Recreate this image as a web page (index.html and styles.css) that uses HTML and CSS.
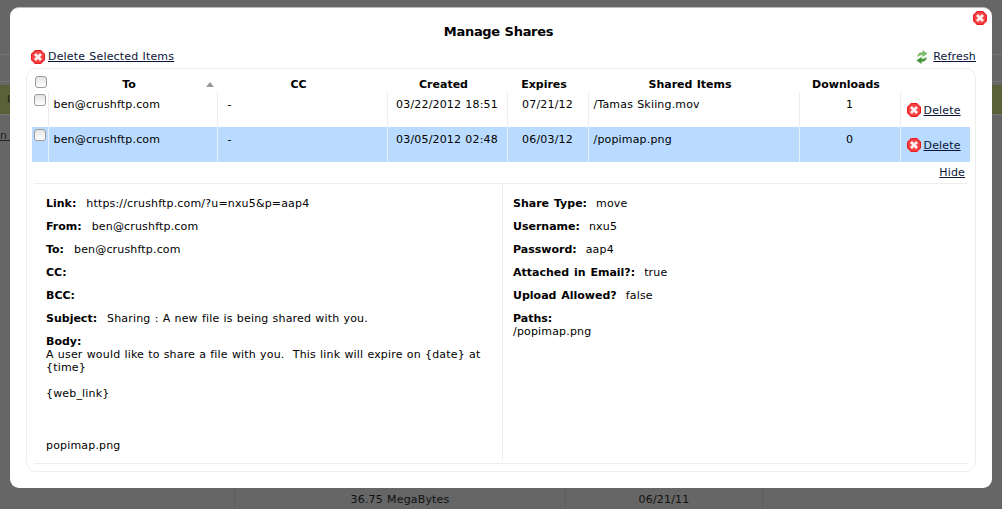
FILE: index.html
```html
<!DOCTYPE html>
<html lang="en">
<head>
<meta charset="utf-8">
<title>Manage Shares</title>
<link rel="stylesheet" href="styles.css">
</head>
<body>
<svg class="defs" width="0" height="0" aria-hidden="true">
  <symbol id="x-icon" viewBox="0 0 14 14">
    <path d="M4 0H10L14 4V10L10 14H4L0 10V4Z" fill="#ee1c22"/>
    <path d="M4.3 1.2H9.7L12.8 4.3V9.7L9.7 12.8H4.3L1.2 9.7V4.3Z" fill="#f4474a"/>
    <path d="M4 4L10 10M10 4L4 10" stroke="#fdf0f0" stroke-width="2.8" fill="none"/>
  </symbol>
</svg>
<div class="backdrop">
  <div class="bg-top"></div>
  <div class="bg-line"></div>
  <div class="bg-bar">U</div>
  <div class="bg-link"><span>n p</span></div>
  <div class="bg-bottom">
    <div class="bg-cell bg-c1"></div>
    <div class="bg-cell bg-c2">36.75 MegaBytes</div>
    <div class="bg-cell bg-c3">06/21/11</div>
    <div class="bg-cell bg-c4"></div>
  </div>
</div>
<main class="modal">
  <svg class="close"><use href="#x-icon"/></svg>
  <h1 class="title">Manage Shares</h1>
  <div class="toolbar">
    <a class="tool" href="#"><svg class="ico"><use href="#x-icon"/></svg><span class="lnk">Delete Selected Items</span></a>
    <a class="tool refresh" href="#">
      <svg class="ico" viewBox="0 0 14 14">
        <path d="M7.5 0L12.5 3.6L7.5 7.2V5.2C5.6 5.2 4 5.6 2.4 7C2 4 4.4 2.2 7.5 2.2Z" fill="#7dbb6c"/>
        <path d="M6.5 14L1.5 10.4L6.5 6.8V8.8C8.4 8.8 10 8.4 11.6 7C12 10 9.6 11.8 6.5 11.8Z" fill="#45963a"/>
      </svg>
      <span class="lnk">Refresh</span></a>
  </div>
  <section class="panel">
    <table class="shares">
      <colgroup>
        <col class="c-check"><col class="c-to"><col class="c-cc"><col class="c-created"><col class="c-expires"><col class="c-items"><col class="c-down"><col class="c-del">
      </colgroup>
      <thead>
        <tr>
          <th><span class="cb cb-head"></span></th>
          <th class="sorted">To<span class="sort"></span></th>
          <th>CC</th>
          <th>Created</th>
          <th>Expires</th>
          <th>Shared Items</th>
          <th>Downloads</th>
          <th></th>
        </tr>
      </thead>
      <tbody>
        <tr>
          <td class="chk"><span class="cb"></span></td>
          <td>ben@crushftp.com</td>
          <td class="pad">-</td>
          <td class="mid">03/22/2012 18:51</td>
          <td class="mid">07/21/12</td>
          <td>/Tamas Skiing.mov</td>
          <td class="mid">1</td>
          <td class="del"><a class="tool" href="#"><svg class="ico"><use href="#x-icon"/></svg><span class="lnk">Delete</span></a></td>
        </tr>
        <tr class="sel">
          <td class="chk"><span class="cb"></span></td>
          <td>ben@crushftp.com</td>
          <td class="pad">-</td>
          <td class="mid">03/05/2012 02:48</td>
          <td class="mid">06/03/12</td>
          <td>/popimap.png</td>
          <td class="mid">0</td>
          <td class="del"><a class="tool" href="#"><svg class="ico"><use href="#x-icon"/></svg><span class="lnk">Delete</span></a></td>
        </tr>
      </tbody>
    </table>
    <div class="hide-row"><a class="lnk" href="#">Hide</a></div>
    <div class="details">
      <div class="col col-left">
        <p><b>Link:</b><span>https://crushftp.com/?u=nxu5&amp;p=aap4</span></p>
        <p><b>From:</b><span>ben@crushftp.com</span></p>
        <p><b>To:</b><span>ben@crushftp.com</span></p>
        <p><b>CC:</b></p>
        <p><b>BCC:</b></p>
        <p><b>Subject:</b><span>Sharing : A new file is being shared with you.</span></p>
        <div class="block">
          <b>Body:</b>
          <div>A user would like to share a file with you.&nbsp; This link will expire on {date} at {time}</div>
          <div class="gap1">{web_link}</div>
          <div class="gap2">popimap.png</div>
        </div>
      </div>
      <div class="col col-right">
        <p><b>Share Type:</b><span>move</span></p>
        <p><b>Username:</b><span>nxu5</span></p>
        <p><b>Password:</b><span>aap4</span></p>
        <p><b>Attached in Email?:</b><span>true</span></p>
        <p><b>Upload Allowed?</b><span>false</span></p>
        <div class="block"><b>Paths:</b><div>/popimap.png</div></div>
      </div>
    </div>
  </section>
</main>
</body>
</html>
```
FILE: styles.css
```css
* { box-sizing: border-box; }
html, body { margin: 0; height: 100%; }
body {
  height: 509px;
  overflow: hidden;
  background: #666;
  font-family: "DejaVu Sans", Verdana, sans-serif;
  font-size: 11px;
  line-height: 13px;
  letter-spacing: 0.17px;
  word-spacing: 0.5px;
  color: #000;
  position: relative;
}
b { letter-spacing: 0; word-spacing: 1px; }
.defs { position: absolute; }
.backdrop { height: 509px; display: flex; flex-direction: column; }
.bg-top { height: 55px; border-bottom: 1px solid #757575; }
.bg-line { margin-top: 26px; height: 1px; background: #757575; }
.bg-bar { margin-top: 3px; height: 30px; padding: 8px 0 0 7px; background: #5a6038; border-bottom: 1px solid #757575; color: #1c1c10; }
.bg-link { margin-top: 14px; color: #222; }
.bg-link span { text-decoration: underline; }
.bg-bottom { margin-top: auto; height: 22px; display: flex; }
.bg-cell { border-right: 1px solid #5e5e5e; text-align: center; padding-top: 6px; color: #111; }
.bg-c1 { width: 235px; }
.bg-c2 { width: 331px; }
.bg-c3 { width: 197px; }
.bg-c4 { flex: 1; border-right: 0; }

.modal {
  position: absolute;
  left: 10px;
  top: 7px;
  width: 982px;
  height: 481px;
  background: #fff;
  border-radius: 9px;
  border-top: 1px solid #bbb;
  padding: 0 16px;
  display: flex;
  flex-direction: column;
}
.close { position: absolute; right: 5px; top: 3px; width: 14px; height: 14px; }
.title {
  margin: 15px 0 0;
  padding-right: 5px;
  height: 17px;
  font-size: 13px;
  line-height: 17px;
  font-weight: bold;
  letter-spacing: -0.3px;
  text-align: center;
}
.toolbar { margin-top: 8px; height: 17px; display: flex; justify-content: space-between; align-items: center; padding-left: 5px; }
.lnk { color: #0a1438; text-decoration: underline; }
.tool { display: inline-flex; align-items: center; gap: 3px; text-decoration: none; }
.refresh { gap: 4px; }
.ico { width: 14px; height: 14px; flex: none; }
.panel {
  margin-top: 3px;
  height: 404px;
  width: 950px;
  border: 1px solid #eee;
  border-radius: 10px;
  padding: 6px 7px 0 5px;
}
.shares { width: 938px; table-layout: fixed; border-collapse: collapse; }
.c-check { width: 16px; }
.c-to { width: 169px; }
.c-cc { width: 170px; }
.c-created { width: 120px; }
.c-expires { width: 81px; }
.c-items { width: 211px; }
.c-down { width: 101px; }
.c-del { width: 70px; }
.shares th {
  height: 17px;
  padding: 3px 7px 0 0;
  font-weight: bold;
  letter-spacing: 0;
  text-align: center;
  vertical-align: top;
  position: relative;
  line-height: 13px;
}
.shares td {
  height: 35px;
  padding: 6px 5px 0;
  vertical-align: top;
  border-left: 1px solid #eee;
}
.shares td.chk { border-left: 0; padding: 2px 0 0 2px; }
.shares td.pad { padding-left: 10px; }
.shares td.mid { text-align: center; }
.shares td.del { padding: 11px 0 0 6px; }
.sel td { background: #b9dbff; border-left-color: #e8f2fb; }
.cb {
  display: block;
  width: 12px;
  height: 12px;
  border: 1px solid #9a9a9a;
  border-radius: 3px;
  background: linear-gradient(#e4e4e4, #fff);
}
.cb-head { margin-left: 3px; position: relative; top: -2px; }
.sort {
  position: absolute;
  right: 3px;
  top: 7px;
  width: 0;
  height: 0;
  border-left: 4px solid transparent;
  border-right: 4px solid transparent;
  border-bottom: 5px solid #999;
}
.hide-row { height: 21px; padding: 4px 3px 0 0; text-align: right; }
.details {
  margin-left: 2px;
  width: 934px;
  height: 281px;
  border-top: 1px solid #eee;
  border-bottom: 1px solid #eee;
  display: flex;
}
.col { padding-top: 13px; }
.col-left { width: 469px; padding-left: 12px; padding-right: 20px; border-right: 1px solid #eee; margin-bottom: 2px; }
.col-right { flex: 1; padding-left: 10px; }
.col p { margin: 0 0 10px; }
.col p span { margin-left: 10px; }
.col-right p span { margin-left: 9px; }
.block div { margin: 0; }
.gap1 { margin-top: 13px !important; }
.gap2 { margin-top: 39px !important; }
```
